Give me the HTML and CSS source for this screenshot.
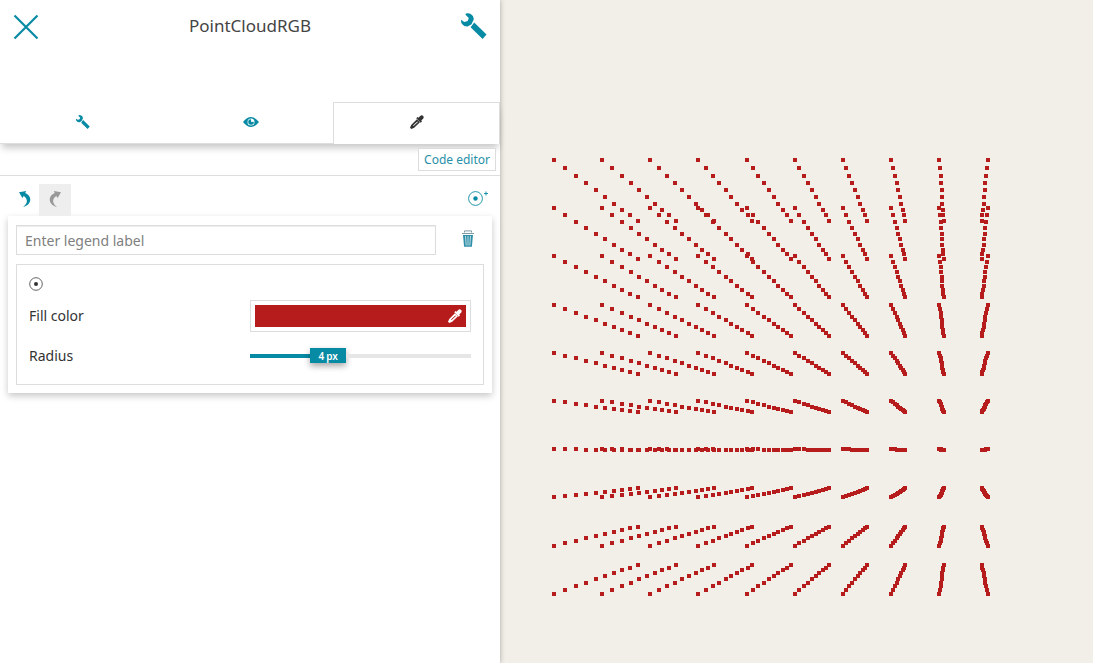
FILE: index.html
```html
<!DOCTYPE html>
<html lang="en">
<head>
<meta charset="utf-8">
<title>PointCloudRGB</title>
<link rel="stylesheet" href="styles.css">
</head>
<body>
<svg class="sprite" aria-hidden="true">
  <symbol id="wrench" viewBox="0 0 26 26">
    <path d="M4.700 .6Q7.500-.3 9.700 1Q13.200 3 12.700 6.600L10.500 11.200L6.700 13.600Q3 13.800 1 11Q-.3 9.500 .2 6.800L3.200 8.900L6.700 8L7.800 5L4.700 2Z"/>
    <path d="M13.200 9.500L25.500 21.400L21.600 25.900L9.600 14.200Z"/>
  </symbol>
  <symbol id="dropper" viewBox="0 0 14 14">
    <path d="M8.500 2.800L10.200 1Q11.700-.5 13 .8T13.100 3.800L11.300 5.500L12 6.500L10.700 7.700L6.300 3.300L7.500 2.100Z"/>
    <path fill-rule="evenodd" d="M6.900 4.300L9.900 7.300L4.200 12.700L1.300 14L0 12.800L1.200 9.900ZM7.300 6.400L3 10.500L3.600 11.100L7.900 6.900Z"/>
  </symbol>
</svg>
<aside class="panel">
  <header class="header">
    <svg class="close" viewBox="0 0 26 26"><path d="M1.500 1.500L24.500 24.500M24.500 1.500L1.500 24.500"/></svg>
    <h1 class="title">PointCloudRGB</h1>
    <svg class="tool"><use href="#wrench"/></svg>
  </header>
  <nav class="tabs">
    <div class="tab"><svg class="tab-icon"><use href="#wrench"/></svg></div>
    <div class="tab">
      <svg class="eye" viewBox="0 0 16 10"><path fill-rule="evenodd" d="M0 5Q8-5 16 5Q8 15 0 5ZM8 1.500A3.500 3.500 0 1 0 8 8.500A3.500 3.500 0 1 0 8 1.500Z"/><path d="M8 2.200L8.200 5L10.800 4.700A2.800 2.800 0 1 1 8 2.200Z"/></svg>
    </div>
    <div class="tab active"><svg class="tab-icon"><use href="#dropper"/></svg></div>
  </nav>
  <div class="editor-bar"><button class="code-btn">Code editor</button></div>
  <div class="toolbar">
    <div class="history">
      <span class="square-btn"><svg class="arrow" viewBox="0 0 12 16"><path d="M0 1.200L7.200 0L6.200 1.900C13.400 4.600 13.200 13.700 4 16C9.400 12.200 8.700 7.600 4.700 5L3.400 6.900Z"/></svg></span>
      <span class="square-btn disabled"><svg class="arrow" viewBox="0 0 12 16"><path d="M12 1.200L4.800 0L5.800 1.900C-1.400 4.600-1.200 13.700 8 16C2.600 12.200 3.300 7.600 7.300 5L8.600 6.900Z"/></svg></span>
    </div>
    <svg class="add-point" viewBox="0 0 21 16"><circle class="ring" cx="7.500" cy="8.500" r="6.900"/><circle cx="7.500" cy="8.500" r="2.200"/><path class="ring" d="M16 3.500H20M18 1.500V5.500"/></svg>
  </div>
  <section class="card">
    <div class="label-row">
      <input class="label-input" type="text" placeholder="Enter legend label">
      <svg class="trash" viewBox="0 0 12 17"><path class="lid" d="M2.500 2.500V.9H9.500V2.500M0 3.500H12"/><path d="M1 5H11L9.900 16.800H2.100Z"/><path class="slots" d="M3.500 6L4.200 15.500M6 6V15.500M8.500 6L7.800 15.500"/></svg>
    </div>
    <div class="symbolizer">
      <svg class="point" viewBox="0 0 14 14"><circle class="ring" cx="7" cy="7" r="6.300"/><circle cx="7" cy="7" r="2"/></svg>
      <div class="field">
        <span>Fill color</span>
        <div class="swatch"><div class="swatch-fill"><svg class="pick"><use href="#dropper"/></svg></div></div>
      </div>
      <div class="field">
        <span>Radius</span>
        <div class="slider"><div class="done"></div><span class="handle">4 px</span><div class="rest"></div></div>
      </div>
    </div>
  </section>
</aside>
<main class="map"><svg class="cloud" viewBox="500 0 593 663"><path id="points"/></svg></main>
<script src="cloud.js"></script>
</body>
</html>
```
FILE: styles.css
```css
* { box-sizing: border-box; }
body {
  margin: 0;
  display: flex;
  height: 663px;
  overflow: hidden;
  background: #f2efe8;
  color: #333;
  font: 14px/20px "Noto Sans", sans-serif;
}
svg { display: block; fill: currentColor; }
.sprite { width: 0; height: 0; flex: none; }
.panel {
  width: 500px;
  flex: none;
  background: #fff;
  box-shadow: 0 0 5px rgba(0, 0, 0, .32);
  z-index: 1;
}
.header {
  height: 102px;
  padding: 13px 13px 0;
  display: flex;
  justify-content: space-between;
  align-items: flex-start;
  color: #078aa3;
}
.close, .tool { width: 26px; height: 26px; }
.close { margin-top: 1px; stroke: #078aa3; stroke-width: 2.2; }
.title { margin: 0; color: #444; font-size: 17px; line-height: 26px; font-weight: 400; }
.tabs {
  height: 42px;
  display: grid;
  grid-template-columns: 166px 167px 167px;
  box-shadow: 0 6px 7px -2px rgba(0, 0, 0, .22);
  color: #078aa3;
}
.tab { display: flex; align-items: center; justify-content: center; padding-bottom: 2px; border-bottom: 1px solid #ddd; }
.tab.active { padding-bottom: 3px; color: #333; border: 1px solid #ddd; border-bottom: 0; background: #fff; }
.tab-icon { width: 14px; height: 14px; }
.eye { width: 16px; height: 10px; margin-left: 3px; }
.editor-bar {
  height: 32px;
  padding: 4px 4px 0;
  display: flex;
  justify-content: flex-end;
  align-items: flex-start;
  border-bottom: 1px solid #ddd;
}
.code-btn {
  width: 78px;
  height: 23px;
  padding: 0;
  border: 1px solid #ddd;
  background: #fff;
  color: #2590a8;
  font: 12px/20px "Noto Sans", sans-serif;
}
.toolbar {
  height: 40px;
  padding: 8px 11px 0 7px;
  display: flex;
  justify-content: space-between;
  color: #078aa3;
}
.history { display: flex; }
.square-btn { width: 32px; height: 32px; padding: 7px 0 0 12px; }
.square-btn.disabled { background: #eee; color: #999; padding-left: 10px; }
.arrow { width: 12px; height: 16px; }
.add-point { width: 21px; height: 16px; margin-top: 6px; }
.ring { fill: none; stroke: currentColor; stroke-width: .9; }
.card {
  width: 484px;
  height: 177px;
  margin-left: 8px;
  padding: 9px 8px 8px;
  background: #fff;
  box-shadow: 0 3px 7px rgba(0, 0, 0, .22);
}
.label-row { display: flex; }
.label-input {
  width: 420px;
  height: 30px;
  padding: 0 8px;
  border: 1px solid #ddd;
  box-shadow: inset 0 1px 1px rgba(0, 0, 0, .075);
  font: 14px/20px "Noto Sans", sans-serif;
}
.label-input::placeholder { color: #808080; opacity: 1; }
.trash { width: 12px; height: 17px; margin: 5px 0 0 26px; color: #2f8fa8; }
.lid { fill: none; stroke: #7d9ba3; }
.slots { stroke: #cfe5ea; stroke-width: .9; }
.symbolizer {
  height: 121px;
  margin-top: 9px;
  padding: 12px 12px 0;
  border: 1px solid #ddd;
}
.point { width: 14px; height: 14px; margin-bottom: 9px; }
.point .ring { stroke-width: .75; }
.field { height: 32px; margin-bottom: 8px; display: flex; align-items: center; justify-content: space-between; }
.swatch { width: 221px; height: 32px; padding: 4px; border: 1px solid #ddd; }
.swatch-fill { height: 22px; display: flex; justify-content: flex-end; align-items: center; padding-right: 4px; background: #b71c1c; color: #fff; }
.pick { width: 14px; height: 14px; }
.slider { width: 221px; display: flex; align-items: center; }
.done { width: 60px; height: 4px; background: #078aa3; }
.rest { flex: 1; height: 4px; background: #e6e6e6; }
.handle {
  width: 36px;
  height: 15px;
  margin-top: -2px;
  background: #078aa3;
  color: #fff;
  text-align: center;
  font: 600 10px/16px "Noto Sans", sans-serif;
  letter-spacing: -.2px;
  box-shadow: 0 3px 6px rgba(0, 0, 0, .35);
}
.map { flex: none; width: 593px; }
.cloud { width: 593px; height: 663px; fill: #b71c1c; shape-rendering: crispEdges; }
```
FILE: cloud.js
```js
// Projected grid coordinates: one row per grid line, one entry per depth layer.
const columns = [
  [554,565,576,586,596,605,614,622,630,638],
  [602,612,622,631,639,647,655,662,669,676],
  [650,659,667,675,682,689,696,702,708,714],
  [698,706,713,719,726,731,737,742,748,752],
  [747,753,758,764,769,774,778,783,787,791],
  [795,799,804,808,812,816,819,823,826,829],
  [843,846,849,852,855,858,860,863,865,867],
  [891,893,895,897,898,900,901,903,904,905],
  [939,940,941,941,942,942,942,943,943,944],
  [988,987,986,985,985,984,984,983,982,982]
];
const rows = [
  [160,168,176,183,190,197,204,210,215,221],
  [208,215,222,228,234,239,245,250,254,259],
  [256,262,267,272,277,281,286,290,294,297],
  [305,309,313,317,320,324,327,330,333,336],
  [353,356,358,361,363,366,368,370,372,374],
  [401,402,404,405,407,408,409,410,411,412],
  [449,449,449,450,450,450,450,450,450,450],
  [497,496,495,494,493,492,491,490,489,488],
  [546,543,541,538,536,534,532,530,528,527],
  [594,590,586,583,579,576,573,570,568,565]
];
let d = "";
for (const xs of columns) {
  for (const ys of rows) {
    xs.forEach((x, k) => { d += `M${x - 2} ${ys[k] - 2}h4v4h-4z`; });
  }
}
document.getElementById("points").setAttribute("d", d);
```
